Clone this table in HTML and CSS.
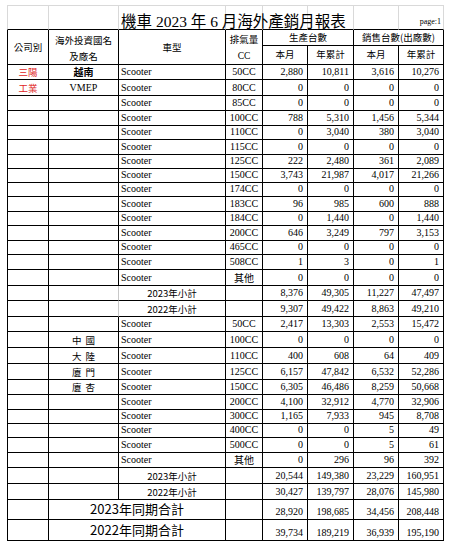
FILE: index.html
```html
<!DOCTYPE html>
<html lang="zh-Hant">
<head>
<meta charset="utf-8">
<title>機車 2023 年 6 月海外產銷月報表</title>
<link rel="stylesheet" href="styles.css">
</head>
<body>
<table class="sheet">
  <colgroup>
    <col class="w1"><col class="w2"><col class="w3"><col class="w4"><col class="w5"><col class="w6"><col class="w7"><col class="w8">
  </colgroup>
  <tr class="rt">
    <td class="c1"></td><td></td><td class="title">機車 2023 年 6 月海外產銷月報表</td><td></td><td></td><td></td><td></td><td class="page">page:1</td>
  </tr>
  <tr class="rh1">
    <td class="c1 hd" rowspan="2">公司別</td>
    <td class="hd two" rowspan="2">海外投資國名<br>及廠名</td>
    <td class="hd" rowspan="2">車型</td>
    <td class="hd two" rowspan="2">排氣量<br><span class="lat">CC</span></td>
    <td class="hd" colspan="2">生產台數</td>
    <td class="hd" colspan="2">銷售台數(出廠數)</td>
  </tr>
  <tr class="rh2">
    <td class="hd">本月</td><td class="hd">年累計</td><td class="hd">本月</td><td class="hd">年累計</td>
  </tr>

  <tr class="h15"><td class="c1 co red">三陽</td><td class="lb bold">越南</td><td class="m">Scooter</td><td class="cc">50CC</td><td class="n">2,880</td><td class="n">10,811</td><td class="n">3,616</td><td class="n">10,276</td></tr>
  <tr class="h16"><td class="c1 co red">工業</td><td class="lb lat">VMEP</td><td class="m">Scooter</td><td class="cc">80CC</td><td class="n">0</td><td class="n">0</td><td class="n">0</td><td class="n">0</td></tr>
  <tr class="h15"><td class="c1"></td><td></td><td class="m">Scooter</td><td class="cc">85CC</td><td class="n">0</td><td class="n">0</td><td class="n">0</td><td class="n">0</td></tr>
  <tr class="h15"><td class="c1"></td><td></td><td class="m">Scooter</td><td class="cc">100CC</td><td class="n">788</td><td class="n">5,310</td><td class="n">1,456</td><td class="n">5,344</td></tr>
  <tr class="h14"><td class="c1"></td><td></td><td class="m">Scooter</td><td class="cc">110CC</td><td class="n">0</td><td class="n">3,040</td><td class="n">380</td><td class="n">3,040</td></tr>
  <tr class="h15"><td class="c1"></td><td></td><td class="m">Scooter</td><td class="cc">115CC</td><td class="n">0</td><td class="n">0</td><td class="n">0</td><td class="n">0</td></tr>
  <tr class="h14"><td class="c1"></td><td></td><td class="m">Scooter</td><td class="cc">125CC</td><td class="n">222</td><td class="n">2,480</td><td class="n">361</td><td class="n">2,089</td></tr>
  <tr class="h14"><td class="c1"></td><td></td><td class="m">Scooter</td><td class="cc">150CC</td><td class="n">3,743</td><td class="n">21,987</td><td class="n">4,017</td><td class="n">21,266</td></tr>
  <tr class="h14"><td class="c1"></td><td></td><td class="m">Scooter</td><td class="cc">174CC</td><td class="n">0</td><td class="n">0</td><td class="n">0</td><td class="n">0</td></tr>
  <tr class="h15"><td class="c1"></td><td></td><td class="m">Scooter</td><td class="cc">183CC</td><td class="n">96</td><td class="n">985</td><td class="n">600</td><td class="n">888</td></tr>
  <tr class="h14"><td class="c1"></td><td></td><td class="m">Scooter</td><td class="cc">184CC</td><td class="n">0</td><td class="n">1,440</td><td class="n">0</td><td class="n">1,440</td></tr>
  <tr class="h15"><td class="c1"></td><td></td><td class="m">Scooter</td><td class="cc">200CC</td><td class="n">646</td><td class="n">3,249</td><td class="n">797</td><td class="n">3,153</td></tr>
  <tr class="h14"><td class="c1"></td><td></td><td class="m">Scooter</td><td class="cc">465CC</td><td class="n">0</td><td class="n">0</td><td class="n">0</td><td class="n">0</td></tr>
  <tr class="h15"><td class="c1"></td><td></td><td class="m">Scooter</td><td class="cc">508CC</td><td class="n">1</td><td class="n">3</td><td class="n">0</td><td class="n">1</td></tr>
  <tr class="h16"><td class="c1"></td><td></td><td class="m">Scooter</td><td class="cc cjk">其他</td><td class="n">0</td><td class="n">0</td><td class="n">0</td><td class="n">0</td></tr>
  <tr class="h15"><td class="c1"></td><td class="lg"></td><td class="sub">2023年小計</td><td></td><td class="n">8,376</td><td class="n">49,305</td><td class="n">11,227</td><td class="n">47,497</td></tr>
  <tr class="h16"><td class="c1"></td><td class="lg"></td><td class="sub">2022年小計</td><td></td><td class="n">9,307</td><td class="n">49,422</td><td class="n">8,863</td><td class="n">49,210</td></tr>

  <tr class="h15"><td class="c1"></td><td></td><td class="m">Scooter</td><td class="cc">50CC</td><td class="n">2,417</td><td class="n">13,303</td><td class="n">2,553</td><td class="n">15,472</td></tr>
  <tr class="h16"><td class="c1"></td><td class="lb sp">中 國</td><td class="m">Scooter</td><td class="cc">100CC</td><td class="n">0</td><td class="n">0</td><td class="n">0</td><td class="n">0</td></tr>
  <tr class="h16"><td class="c1"></td><td class="lb sp">大 陸</td><td class="m">Scooter</td><td class="cc">110CC</td><td class="n">400</td><td class="n">608</td><td class="n">64</td><td class="n">409</td></tr>
  <tr class="h16"><td class="c1"></td><td class="lb sp">廈 門</td><td class="m">Scooter</td><td class="cc">125CC</td><td class="n">6,157</td><td class="n">47,842</td><td class="n">6,532</td><td class="n">52,286</td></tr>
  <tr class="h15"><td class="c1"></td><td class="lb sp">廈 杏</td><td class="m">Scooter</td><td class="cc">150CC</td><td class="n">6,305</td><td class="n">46,486</td><td class="n">8,259</td><td class="n">50,668</td></tr>
  <tr class="h15"><td class="c1"></td><td></td><td class="m">Scooter</td><td class="cc">200CC</td><td class="n">4,100</td><td class="n">32,912</td><td class="n">4,770</td><td class="n">32,906</td></tr>
  <tr class="h13"><td class="c1"></td><td></td><td class="m">Scooter</td><td class="cc">300CC</td><td class="n">1,165</td><td class="n">7,933</td><td class="n">945</td><td class="n">8,708</td></tr>
  <tr class="h13"><td class="c1"></td><td></td><td class="m">Scooter</td><td class="cc">400CC</td><td class="n">0</td><td class="n">0</td><td class="n">5</td><td class="n">49</td></tr>
  <tr class="h15"><td class="c1"></td><td></td><td class="m">Scooter</td><td class="cc">500CC</td><td class="n">0</td><td class="n">0</td><td class="n">5</td><td class="n">61</td></tr>
  <tr class="h15"><td class="c1"></td><td></td><td class="m">Scooter</td><td class="cc cjk">其他</td><td class="n">0</td><td class="n">296</td><td class="n">96</td><td class="n">392</td></tr>
  <tr class="h16"><td class="c1"></td><td></td><td class="sub">2023年小計</td><td></td><td class="n">20,544</td><td class="n">149,380</td><td class="n">23,229</td><td class="n">160,951</td></tr>
  <tr class="h16"><td class="c1"></td><td></td><td class="sub">2022年小計</td><td></td><td class="n">30,427</td><td class="n">139,797</td><td class="n">28,076</td><td class="n">145,980</td></tr>

  <tr class="h20"><td class="c1"></td><td class="tot" colspan="2">2023年同期合計</td><td></td><td class="n">28,920</td><td class="n">198,685</td><td class="n">34,456</td><td class="n">208,448</td></tr>
  <tr class="h21"><td class="c1"></td><td class="tot" colspan="2">2022年同期合計</td><td></td><td class="n">39,734</td><td class="n">189,219</td><td class="n">36,939</td><td class="n">195,190</td></tr>
</table>
</body>
</html>
```

FILE: styles.css
```css
html, body {
  margin: 0;
  padding: 0;
  background: #ffffff;
}

.sheet {
  border-collapse: separate;
  border-spacing: 0;
  table-layout: fixed;
  width: 437px;
  margin: 5px 0 0 7px;
  font-family: "Liberation Serif", "Noto Sans CJK TC", serif;
  font-size: 10px;
  color: #000000;
}

.w1 { width: 42px; }
.w2 { width: 70px; }
.w3 { width: 107px; }
.w4 { width: 37px; }
.w5 { width: 45px; }
.w6 { width: 46px; }
.w7 { width: 45px; }
.w8 { width: 45px; }

.sheet td {
  border-right: 1px solid #000000;
  border-bottom: 1px solid #000000;
  padding: 0 2px 1px 2px;
  line-height: 12px;
  white-space: nowrap;
  overflow: visible;
  vertical-align: bottom;
}

.sheet td.c1 {
  border-left: 1px solid #000000;
}

/* title row */
.rt { height: 25px; }
.rt td {
  border-top: 1px solid #d9d9d9;
  border-right-color: #d9d9d9;
  border-bottom-color: #000000;
}
.rt td.c1 { border-left-color: #d9d9d9; }

.title {
  font-size: 15.5px;
  line-height: 18px;
  padding-bottom: 2px;
}

.page {
  font-size: 8px;
  text-align: right;
  padding-right: 1px;
  padding-bottom: 1px;
}

/* header rows */
.rh1 { height: 15px; }
.rh2 { height: 18px; }

.hd {
  font-family: "Noto Sans CJK TC", sans-serif;
  font-size: 9.5px;
  text-align: center;
  vertical-align: middle !important;
  line-height: 15px;
}

.hd.two {
  line-height: 16px;
  padding-top: 1px;
  padding-bottom: 0;
}

.lat {
  font-family: "Liberation Serif", serif;
}

/* row heights */
.h13 { height: 13px; }
.h14 { height: 14px; }
.h15 { height: 15px; }
.h16 { height: 16px; }
.h20 { height: 20px; }
.h21 { height: 21px; }

/* cell kinds */
.n {
  text-align: right;
  padding-right: 4px !important;
}

.cc {
  text-align: center;
}

.m {
  text-align: left;
  padding-left: 2px;
}

.cjk {
  font-family: "Noto Sans CJK TC", sans-serif;
  font-size: 10px;
}

.co {
  text-align: center;
  font-family: "Noto Sans CJK TC", sans-serif;
  font-size: 9.5px;
}

.red {
  color: #e02424;
}

.lb {
  text-align: center;
  font-size: 10px;
}

.bold {
  font-family: "Noto Sans CJK TC", sans-serif;
  font-weight: bold;
}

.sp {
  font-family: "Noto Sans CJK TC", sans-serif;
  font-size: 9.5px;
  word-spacing: 2px;
}

.lg {
  border-right-color: #c8c8c8 !important;
}

.sub {
  font-family: "Noto Sans CJK TC", sans-serif;
  font-size: 9.5px;
  text-align: center;
}

.tot {
  font-family: "Noto Sans CJK TC", sans-serif;
  font-size: 13px;
  text-align: center;
  vertical-align: middle !important;
  line-height: 17px;
}
```
